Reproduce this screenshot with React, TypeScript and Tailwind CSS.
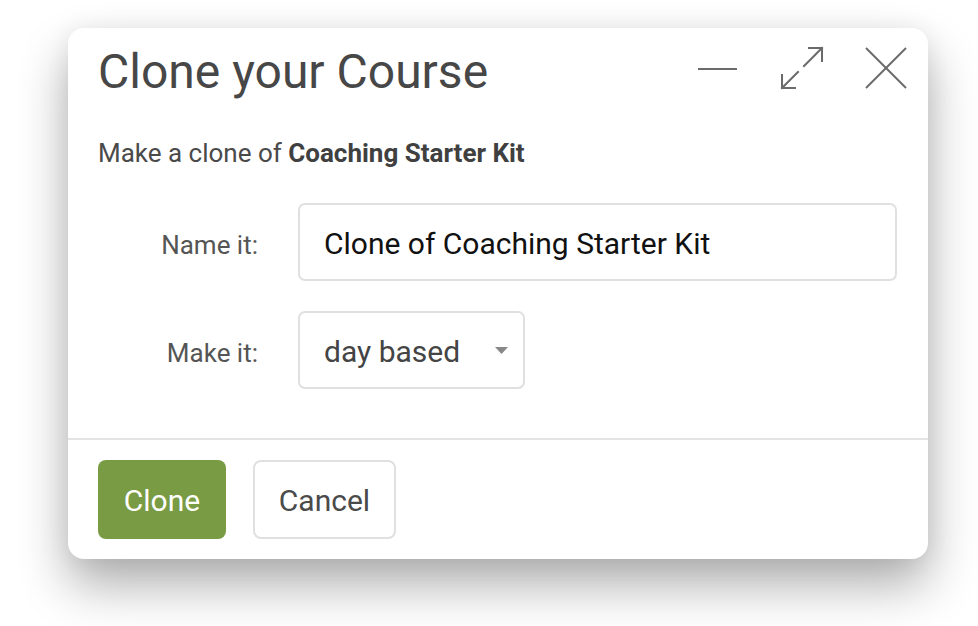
import React from "react";

function MinimizeIcon() {
  return (
    <svg width="44" height="44" viewBox="0 0 44 44" fill="none" stroke="#6b6b6b" strokeWidth="2">
      <line x1="2" y1="23" x2="41" y2="23" />
    </svg>
  );
}

function ExpandIcon() {
  return (
    <svg width="44" height="44" viewBox="0 0 44 44" fill="none" stroke="#6b6b6b" strokeWidth="2" strokeLinecap="square">
      <line x1="42" y1="2" x2="24" y2="20" />
      <polyline points="29,2 42,2 42,15" />
      <line x1="2" y1="42" x2="18" y2="26" />
      <polyline points="2,29 2,42 15,42" />
    </svg>
  );
}

function CloseIcon() {
  return (
    <svg width="44" height="44" viewBox="0 0 44 44" fill="none" stroke="#6b6b6b" strokeWidth="2">
      <line x1="2" y1="2" x2="42" y2="42" />
      <line x1="42" y1="2" x2="2" y2="42" />
    </svg>
  );
}

export default function App() {
  return (
    <div
      className="w-[978px] h-[626px] bg-white pt-[28px] pl-[68px] overflow-hidden"
      style={{ fontFamily: "Roboto, 'Liberation Sans', sans-serif" }}
    >
      <div className="w-[860px] h-[531px] bg-white rounded-[16px] shadow-[0_26px_50px_rgba(0,0,0,0.32),0_0_24px_rgba(0,0,0,0.06)] flex flex-col">
        {/* Header */}
        <div className="flex items-start justify-between pl-[30px] pr-[20px]">
          <h1 className="mt-[16px] text-[48px] leading-[56px] font-normal text-[#474747]">
            Clone your Course
          </h1>
          <div className="flex items-center gap-[40px] mt-[18px]">
            <MinimizeIcon />
            <ExpandIcon />
            <CloseIcon />
          </div>
        </div>

        {/* Body */}
        <div className="pl-[30px] pr-[31px] pb-[49px]">
          <p className="mt-[38px] text-[26px] leading-[30px] text-[#4a4a4a]">
            Make a clone of <span className="font-bold text-[#404040]">Coaching Starter Kit</span>
          </p>

          <div className="mt-[35px] flex items-baseline gap-[40px]">
            <div className="w-[160px] text-right text-[26px] leading-[30px] text-[#555555]">Name it:</div>
            <div className="flex-1 h-[78px] border-2 border-[#e0e0e0] rounded-[7px] pl-[24px] pt-[21px] text-[30px] leading-[36px] text-[#111111]">
              Clone of Coaching Starter Kit
            </div>
          </div>

          <div className="mt-[30px] flex items-baseline gap-[40px]">
            <div className="w-[160px] text-right text-[26px] leading-[30px] text-[#555555]">Make it:</div>
            <div className="w-[227px] h-[78px] border-2 border-[#e0e0e0] rounded-[7px] pl-[24px] pr-[15px] pt-[21px] flex items-start justify-between text-[30px] leading-[36px] text-[#444444]">
              <span>day based</span>
              <svg width="13" height="7" viewBox="0 0 13 7" className="mt-[13px]">
                <polygon points="0,0 13,0 6.5,7" fill="#888888" />
              </svg>
            </div>
          </div>
        </div>

        {/* Footer */}
        <div className="border-t-2 border-[#e4e4e4] pt-[20px] pl-[30px] flex gap-[27px]">
          <button className="h-[79px] w-[128px] rounded-[8px] bg-[#789b43] text-white text-[30px] leading-[36px] pt-[3px]">
            Clone
          </button>
          <button className="h-[79px] w-[143px] rounded-[8px] border-2 border-[#e0e0e0] bg-white text-[#4a4a4a] text-[30px] leading-[36px] pt-[3px]">
            Cancel
          </button>
        </div>
      </div>
    </div>
  );
}
